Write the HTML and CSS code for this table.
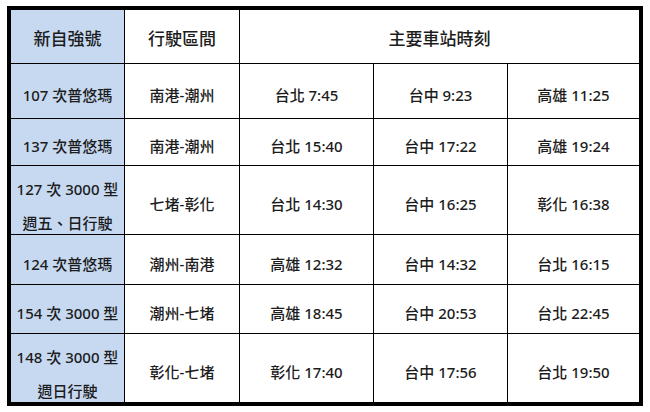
FILE: index.html
```html
<!DOCTYPE html>
<html lang="zh-Hant">
<head>
<meta charset="utf-8">
<title>新自強號時刻表</title>
<link rel="stylesheet" href="styles.css">
</head>
<body>
<div class="table">
  <div class="cell head blue">新自強號</div>
  <div class="cell head">行駛區間</div>
  <div class="cell head span3 last">主要車站時刻</div>

  <div class="cell blue">107 次普悠瑪</div>
  <div class="cell">南港-潮州</div>
  <div class="cell">台北 7:45</div>
  <div class="cell">台中 9:23</div>
  <div class="cell last">高雄 11:25</div>

  <div class="cell blue">137 次普悠瑪</div>
  <div class="cell">南港-潮州</div>
  <div class="cell">台北 15:40</div>
  <div class="cell">台中 17:22</div>
  <div class="cell last">高雄 19:24</div>

  <div class="cell blue multi">127 次 3000 型<br>週五、日行駛</div>
  <div class="cell">七堵-彰化</div>
  <div class="cell">台北 14:30</div>
  <div class="cell">台中 16:25</div>
  <div class="cell last">彰化 16:38</div>

  <div class="cell blue">124 次普悠瑪</div>
  <div class="cell">潮州-南港</div>
  <div class="cell">高雄 12:32</div>
  <div class="cell">台中 14:32</div>
  <div class="cell last">台北 16:15</div>

  <div class="cell blue">154 次 3000 型</div>
  <div class="cell">潮州-七堵</div>
  <div class="cell">高雄 18:45</div>
  <div class="cell">台中 20:53</div>
  <div class="cell last">台北 22:45</div>

  <div class="cell blue multi bottom">148 次 3000 型<br>週日行駛</div>
  <div class="cell bottom">彰化-七堵</div>
  <div class="cell bottom">彰化 17:40</div>
  <div class="cell bottom">台中 17:56</div>
  <div class="cell bottom last">台北 19:50</div>
</div>
</body>
</html>
```
FILE: styles.css
```css
html, body {
  margin: 0;
  padding: 0;
  background: #ffffff;
}

body {
  font-family: "Noto Sans", "Noto Sans CJK TC", sans-serif;
  color: #1c1c1c;
}

.table {
  margin: 6px 0 0 7px;
  width: 636px;
  box-sizing: border-box;
  border: 4px solid #000;
  display: grid;
  grid-template-columns: 114px 115px 134px 134px 131px;
  grid-template-rows: 54px 55px 47px 69px 50px 49px 68px;
}

.cell {
  box-sizing: border-box;
  border-right: 1px solid #000;
  border-bottom: 1px solid #000;
  display: flex;
  align-items: center;
  justify-content: center;
  text-align: center;
  font-size: 15px;
  font-weight: 500;
  line-height: 20px;
  padding-top: 8px;
  white-space: nowrap;
}

.head {
  font-size: 17px;
  padding-top: 5px;
}

.span3 {
  grid-column: span 3;
}

.blue {
  background: #c6d9f1;
}

.last {
  border-right: none;
}

.bottom {
  border-bottom: none;
}

.multi {
  line-height: 34px;
  padding-top: 11px;
}
```
